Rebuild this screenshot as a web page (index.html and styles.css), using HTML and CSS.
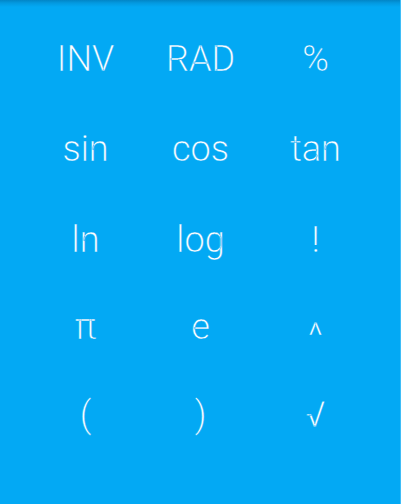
FILE: index.html
```html
<!DOCTYPE html>
<html>
<head>
<meta charset="utf-8">
<link rel="stylesheet" href="styles.css">
</head>
<body>
<div class="pad">
  <div class="key">INV</div><div class="key">RAD</div><div class="key">%</div>
  <div class="key">sin</div><div class="key">cos</div><div class="key">tan</div>
  <div class="key">ln</div><div class="key">log</div><div class="key">!</div>
  <div class="key">π</div><div class="key">e</div><div class="key"><span class="caret">^</span></div>
  <div class="key">(</div><div class="key">)</div><div class="key">√</div>
</div>
</body>
</html>
```
FILE: styles.css
```css
html, body {
  margin: 0;
  padding: 0;
}
body {
  width: 401px;
  height: 504px;
  overflow: hidden;
  background: #03A9F4;
}
.pad {
  box-sizing: border-box;
  height: 504px;
  padding: 16px 28px 0 28px;
  display: grid;
  grid-template-columns: repeat(3, 115px);
  grid-template-rows: 86px 94px 87px 88px 88px;
  background-image: linear-gradient(to bottom, rgba(0, 40, 80, 0.28) 0, rgba(0, 40, 80, 0.12) 3px, rgba(0, 40, 80, 0) 7px);
  background-repeat: no-repeat;
  border-right: 1px solid #3fbdf7;
  font-family: Roboto, "Liberation Sans", sans-serif;
  font-weight: 300;
  font-size: 36px;
  color: #ffffff;
  -webkit-text-stroke: 0.35px #03A9F4;
}
.key {
  display: flex;
  align-items: center;
  justify-content: center;
}
.caret {
  display: inline-block;
  transform: translateY(9px);
}
```
